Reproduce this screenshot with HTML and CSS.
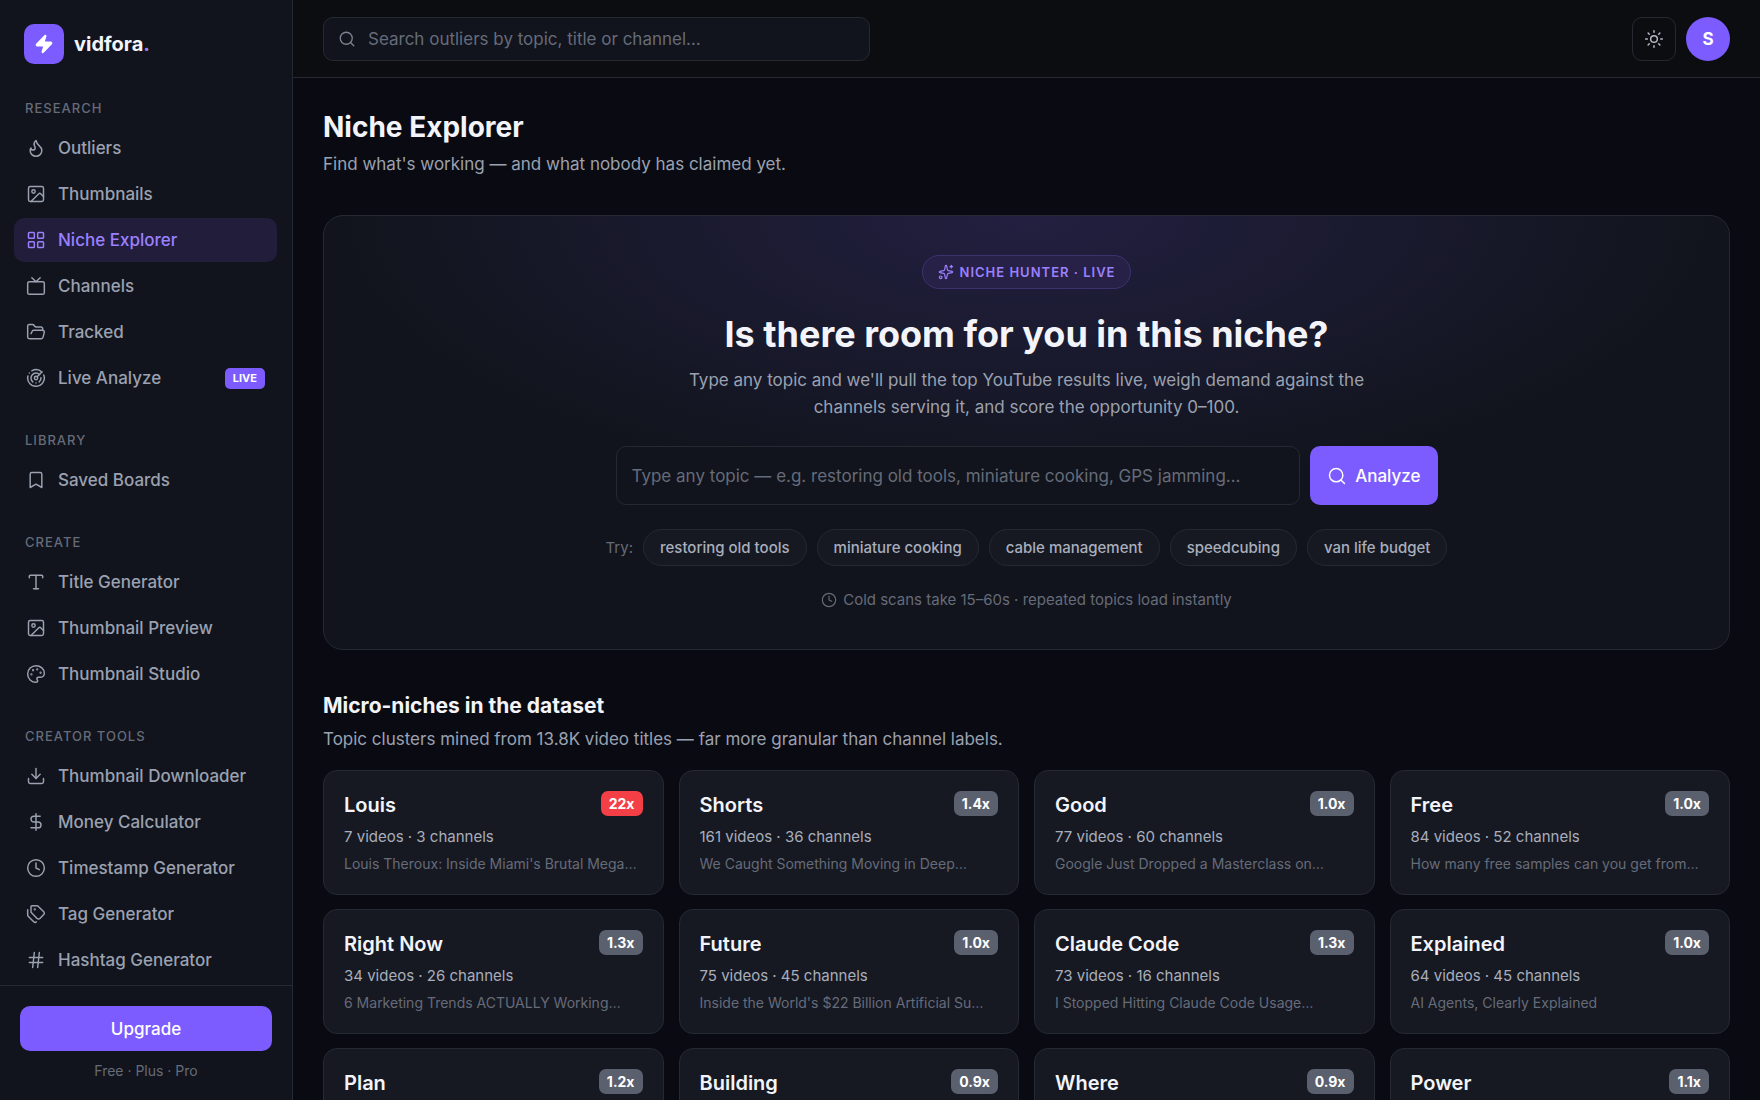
FILE: index.html
```
<!DOCTYPE html>
<html lang="en">

<head>
    <meta charset="utf-8">
    <meta name="viewport" content="width=device-width, initial-scale=1">
    <title>Niche Explorer - vidfora</title>
    <link rel="stylesheet" href="styles.css">
</head>
<body>
    <!-- icons used more than once -->
    <svg class="sprite" aria-hidden="true">
        <symbol id="i-image" viewBox="0 0 24 24"><rect width="18" height="18" x="3" y="3" rx="2"/><circle cx="9" cy="9" r="2"/><path d="m21 15-3.086-3.086a2 2 0 0 0-2.828 0L6 21"/></symbol>
        <symbol id="i-clock" viewBox="0 0 24 24"><circle cx="12" cy="12" r="10"/><path d="M12 6v6l4 2"/></symbol>
        <symbol id="i-search" viewBox="0 0 24 24"><circle cx="11" cy="11" r="8"/><path d="m21 21-4.3-4.3"/></symbol>
    </svg>

    <div class="app">
        <aside class="sidebar">
            <a class="logo" href="#">
                <span class="logo-mark">
                    <svg viewBox="0 0 24 24"><path d="M4 14a1 1 0 0 1-.78-1.63l9.9-10.2a.5.5 0 0 1 .86.46l-1.92 6.02A1 1 0 0 0 13 10h7a1 1 0 0 1 .78 1.63l-9.9 10.2a.5.5 0 0 1-.86-.46l1.92-6.02A1 1 0 0 0 11 14z"/></svg>
                </span>
                <span class="logo-text">vidfora<span class="dot">.</span></span>
            </a>

            <nav class="nav">
                <div class="nav-group">
                    <h2 class="nav-label">Research</h2>
                    <a class="nav-item" href="#"><svg class="icon" viewBox="0 0 24 24"><path d="M8.5 14.5A2.5 2.5 0 0 0 11 12c0-1.38-.5-2-1-3-1.072-2.143-.224-4.054 2-6 .5 2.5 2 4.9 4 6.5 2 1.6 3 3.5 3 5.5a7 7 0 1 1-14 0c0-1.153.433-2.294 1-3a2.5 2.5 0 0 0 2.5 2.5z"/></svg>Outliers</a>
                    <a class="nav-item" href="#"><svg class="icon"><use href="#i-image"/></svg>Thumbnails</a>
                    <a class="nav-item active" href="#"><svg class="icon" viewBox="0 0 24 24"><rect width="7" height="7" x="3" y="3" rx="1"/><rect width="7" height="7" x="14" y="3" rx="1"/><rect width="7" height="7" x="14" y="14" rx="1"/><rect width="7" height="7" x="3" y="14" rx="1"/></svg>Niche Explorer</a>
                    <a class="nav-item" href="#"><svg class="icon" viewBox="0 0 24 24"><path d="m17 2-5 5-5-5"/><rect width="20" height="15" x="2" y="7" rx="2"/></svg>Channels</a>
                    <a class="nav-item" href="#"><svg class="icon" viewBox="0 0 24 24"><path d="m6 14 1.5-2.9A2 2 0 0 1 9.24 10H20a2 2 0 0 1 1.94 2.5l-1.54 6a2 2 0 0 1-1.95 1.5H4a2 2 0 0 1-2-2V5a2 2 0 0 1 2-2h3.9a2 2 0 0 1 1.69.9l.81 1.2a2 2 0 0 0 1.67.9H18a2 2 0 0 1 2 2v2"/></svg>Tracked</a>
                    <a class="nav-item" href="#"><svg class="icon" viewBox="0 0 24 24"><path d="M19.07 4.93A10 10 0 0 0 6.99 3.34"/><path d="M4 6h.01"/><path d="M2.29 9.62A10 10 0 1 0 21.31 8.35"/><path d="M16.24 7.76A6 6 0 1 0 8.23 16.67"/><path d="M12 18h.01"/><path d="M17.99 11.66A6 6 0 0 1 15.77 16.67"/><circle cx="12" cy="12" r="2"/><path d="m13.41 10.59 5.66-5.66"/></svg>Live Analyze<span class="live">LIVE</span></a>
                </div>
                <div class="nav-group">
                    <h2 class="nav-label">Library</h2>
                    <a class="nav-item" href="#"><svg class="icon" viewBox="0 0 24 24"><path d="m19 21-7-4-7 4V5a2 2 0 0 1 2-2h10a2 2 0 0 1 2 2v16z"/></svg>Saved Boards</a>
                </div>
                <div class="nav-group">
                    <h2 class="nav-label">Create</h2>
                    <a class="nav-item" href="#"><svg class="icon" viewBox="0 0 24 24"><path d="M4 7V5a1 1 0 0 1 1-1h14a1 1 0 0 1 1 1v2"/><path d="M9 20h6"/><path d="M12 4v16"/></svg>Title Generator</a>
                    <a class="nav-item" href="#"><svg class="icon"><use href="#i-image"/></svg>Thumbnail Preview</a>
                    <a class="nav-item" href="#"><svg class="icon" viewBox="0 0 24 24"><path d="M12 22a1 1 0 0 1 0-20 10 9 0 0 1 10 9 5 5 0 0 1-5 5h-2.25a1.75 1.75 0 0 0-1.4 2.8l.3.4a1.75 1.75 0 0 1-1.4 2.8z"/><circle cx="13.5" cy="6.5" r=".5"/><circle cx="17.5" cy="10.5" r=".5"/><circle cx="6.5" cy="12.5" r=".5"/><circle cx="8.5" cy="7.5" r=".5"/></svg>Thumbnail Studio</a>
                </div>
                <div class="nav-group">
                    <h2 class="nav-label">Creator Tools</h2>
                    <a class="nav-item" href="#"><svg class="icon" viewBox="0 0 24 24"><path d="M21 15v4a2 2 0 0 1-2 2H5a2 2 0 0 1-2-2v-4"/><path d="m7 10 5 5 5-5"/><path d="M12 15V3"/></svg>Thumbnail Downloader</a>
                    <a class="nav-item" href="#"><svg class="icon" viewBox="0 0 24 24"><path d="M12 2v20"/><path d="M17 5H9.5a3.5 3.5 0 0 0 0 7h5a3.5 3.5 0 0 1 0 7H6"/></svg>Money Calculator</a>
                    <a class="nav-item" href="#"><svg class="icon"><use href="#i-clock"/></svg>Timestamp Generator</a>
                    <a class="nav-item" href="#"><svg class="icon" viewBox="0 0 24 24"><path d="M13.172 2a2 2 0 0 1 1.414.586l6.71 6.71a2.4 2.4 0 0 1 0 3.408l-4.592 4.592a2.4 2.4 0 0 1-3.408 0l-6.71-6.71A2 2 0 0 1 6 9.172V3a1 1 0 0 1 1-1z"/><path d="M2 7v6.172a2 2 0 0 0 .586 1.414l6.71 6.71a2.4 2.4 0 0 0 3.191.193"/><circle cx="10.5" cy="6.5" r=".5"/></svg>Tag Generator</a>
                    <a class="nav-item" href="#"><svg class="icon" viewBox="0 0 24 24"><path d="M4 9h16"/><path d="M4 15h16"/><path d="M10 3 8 21"/><path d="m16 3-2 18"/></svg>Hashtag Generator</a>
                </div>
            </nav>

            <div class="sidebar-foot">
                <button class="upgrade" type="button">Upgrade</button>
                <p class="plans">Free · Plus · Pro</p>
            </div>
        </aside>

        <div class="content">
            <header class="topbar">
                <label class="search">
                    <svg class="icon icon-sm"><use href="#i-search"/></svg>
                    <input type="search" aria-label="Search outliers" placeholder="Search outliers by topic, title or channel…">
                </label>
                <div class="topbar-right">
                    <button class="theme" type="button" aria-label="Toggle theme">
                        <svg class="icon" viewBox="0 0 24 24"><circle cx="12" cy="12" r="4"/><path d="M12 2v2"/><path d="M12 20v2"/><path d="m4.93 4.93 1.41 1.41"/><path d="m17.66 17.66 1.41 1.41"/><path d="M2 12h2"/><path d="M20 12h2"/><path d="m6.34 17.66-1.41 1.41"/><path d="m19.07 4.93-1.41 1.41"/></svg>
                    </button>
                    <button class="avatar" type="button">S</button>
                </div>
            </header>

            <main class="main">
                <h1 class="page-title">Niche Explorer</h1>
                <p class="page-sub">Find what's working — and what nobody has claimed yet.</p>

                <section class="hero">
                    <span class="hero-badge">
                        <svg class="icon icon-xs" viewBox="0 0 24 24"><path d="M11.017 2.814a1 1 0 0 1 1.966 0l1.051 5.558a2 2 0 0 0 1.594 1.594l5.558 1.051a1 1 0 0 1 0 1.966l-5.558 1.051a2 2 0 0 0-1.594 1.594l-1.051 5.558a1 1 0 0 1-1.966 0l-1.051-5.558a2 2 0 0 0-1.594-1.594l-5.558-1.051a1 1 0 0 1 0-1.966l5.558-1.051a2 2 0 0 0 1.594-1.594z"/><path d="M20 2v4"/><path d="M22 4h-4"/><circle cx="4" cy="20" r="2"/></svg>
                        NICHE HUNTER · LIVE
                    </span>
                    <h2 class="hero-title">Is there room for you in this niche?</h2>
                    <p class="hero-text">Type any topic and we'll pull the top YouTube results live, weigh demand against the channels serving it, and score the opportunity 0–100.</p>
                    <form class="hero-form">
                        <input type="text" aria-label="Topic" placeholder="Type any topic — e.g. restoring old tools, miniature cooking, GPS jamming…">
                        <button type="button"><svg class="icon"><use href="#i-search"/></svg>Analyze</button>
                    </form>
                    <div class="chips">
                        <span class="try">Try:</span>
                        <button class="chip" type="button">restoring old tools</button>
                        <button class="chip" type="button">miniature cooking</button>
                        <button class="chip" type="button">cable management</button>
                        <button class="chip" type="button">speedcubing</button>
                        <button class="chip" type="button">van life budget</button>
                    </div>
                    <p class="hero-note"><svg class="icon icon-xs"><use href="#i-clock"/></svg>Cold scans take 15–60s · repeated topics load instantly</p>
                </section>

                <h2 class="section-title">Micro-niches in the dataset</h2>
                <p class="section-sub">Topic clusters mined from 13.8K video titles — far more granular than channel labels.</p>

                <div class="cards">
                    <a class="card" href="#">
                        <div class="card-head"><h3>Louis</h3><span class="score hot">22x</span></div>
                        <p class="card-meta">7 videos · 3 channels</p>
                        <p class="card-video">Louis Theroux: Inside Miami's Brutal Mega…</p>
                    </a>
                    <a class="card" href="#">
                        <div class="card-head"><h3>Shorts</h3><span class="score">1.4x</span></div>
                        <p class="card-meta">161 videos · 36 channels</p>
                        <p class="card-video">We Caught Something Moving in Deep…</p>
                    </a>
                    <a class="card" href="#">
                        <div class="card-head"><h3>Good</h3><span class="score">1.0x</span></div>
                        <p class="card-meta">77 videos · 60 channels</p>
                        <p class="card-video">Google Just Dropped a Masterclass on…</p>
                    </a>
                    <a class="card" href="#">
                        <div class="card-head"><h3>Free</h3><span class="score">1.0x</span></div>
                        <p class="card-meta">84 videos · 52 channels</p>
                        <p class="card-video">How many free samples can you get from…</p>
                    </a>
                    <a class="card" href="#">
                        <div class="card-head"><h3>Right Now</h3><span class="score">1.3x</span></div>
                        <p class="card-meta">34 videos · 26 channels</p>
                        <p class="card-video">6 Marketing Trends ACTUALLY Working…</p>
                    </a>
                    <a class="card" href="#">
                        <div class="card-head"><h3>Future</h3><span class="score">1.0x</span></div>
                        <p class="card-meta">75 videos · 45 channels</p>
                        <p class="card-video">Inside the World's $22 Billion Artificial Su…</p>
                    </a>
                    <a class="card" href="#">
                        <div class="card-head"><h3>Claude Code</h3><span class="score">1.3x</span></div>
                        <p class="card-meta">73 videos · 16 channels</p>
                        <p class="card-video">I Stopped Hitting Claude Code Usage…</p>
                    </a>
                    <a class="card" href="#">
                        <div class="card-head"><h3>Explained</h3><span class="score">1.0x</span></div>
                        <p class="card-meta">64 videos · 45 channels</p>
                        <p class="card-video">AI Agents, Clearly Explained</p>
                    </a>
                    <a class="card" href="#">
                        <div class="card-head"><h3>Plan</h3><span class="score">1.2x</span></div>
                    </a>
                    <a class="card" href="#">
                        <div class="card-head"><h3>Building</h3><span class="score">0.9x</span></div>
                    </a>
                    <a class="card" href="#">
                        <div class="card-head"><h3>Where</h3><span class="score">0.9x</span></div>
                    </a>
                    <a class="card" href="#">
                        <div class="card-head"><h3>Power</h3><span class="score">1.1x</span></div>
                    </a>
                </div>
            </main>
        </div>
    </div>
</body>

</html>
```
FILE: styles.css
```
:root {
    --bg: #0a0b12;
    --panel: #11141c;
    --card: #161922;
    --line: #252932;
    --text: #f3f4fa;
    --soft: #9ba1b0;
    --dim: #666b79;
    --accent: #7c5cff;
    --accent-text: #9b80ff;
}

* {
    box-sizing: border-box;
}

body {
    margin: 0;
    background: var(--bg);
    color: var(--text);
    font-family: Inter, "Liberation Sans", sans-serif;
    font-size: 16px;
}

h1, h2, h3, p {
    margin: 0;
}

a {
    color: inherit;
    text-decoration: none;
}

button, input {
    font-family: inherit;
    color: inherit;
}

button {
    cursor: pointer;
}

input::placeholder {
    color: var(--dim);
    opacity: 1;
}

.sprite {
    display: none;
}

.icon {
    width: 20px;
    height: 20px;
    flex: none;
    fill: none;
    stroke: currentColor;
    stroke-width: 1.75;
    stroke-linecap: round;
    stroke-linejoin: round;
}

.icon-sm {
    width: 18px;
    height: 18px;
}

.icon-xs {
    width: 16px;
    height: 16px;
}

.app {
    display: flex;
    height: 100vh;
}

/* sidebar */
.sidebar {
    width: 293px;
    flex: none;
    display: flex;
    flex-direction: column;
    background: var(--panel);
    border-right: 1px solid var(--line);
}

.logo {
    display: flex;
    align-items: center;
    gap: 10px;
    padding: 24px 24px 0;
}

.logo-mark {
    display: grid;
    place-items: center;
    width: 40px;
    height: 40px;
    border-radius: 10px;
    background: var(--accent);
}

.logo-mark svg {
    width: 20px;
    height: 20px;
    fill: #fff;
    stroke: #fff;
    stroke-width: 2;
    stroke-linejoin: round;
}

.logo-text {
    font-size: 20px;
    font-weight: 700;
}

.dot {
    color: var(--accent-text);
}

.nav {
    flex: 1;
    min-height: 0;
    display: flex;
    flex-direction: column;
    gap: 31px;
    padding: 35px 15px 0 14px;
    overflow-y: auto;
    scrollbar-width: none;
}

.nav-group {
    display: flex;
    flex-direction: column;
    gap: 2px;
}

.nav-label {
    padding: 0 11px;
    margin-bottom: 7px;
    font-size: 13px;
    line-height: 18px;
    font-weight: 500;
    letter-spacing: 1px;
    text-transform: uppercase;
    color: var(--dim);
}

.nav-item {
    display: flex;
    align-items: center;
    gap: 12px;
    height: 44px;
    padding: 0 12px;
    border-radius: 10px;
    font-size: 17px;
    font-weight: 500;
    color: var(--soft);
}

.nav-item.active {
    background: #211d3b;
    color: var(--accent-text);
}

.live {
    margin-left: auto;
    padding: 0 8px;
    border-radius: 5px;
    background: var(--accent);
    color: #fff;
    font-size: 11px;
    line-height: 21px;
    font-weight: 700;
}

.sidebar-foot {
    padding: 20px 20px 19px;
    border-top: 1px solid var(--line);
    text-align: center;
}

.upgrade {
    width: 100%;
    height: 45px;
    border: 0;
    border-radius: 10px;
    background: var(--accent);
    color: #fff;
    font-size: 17px;
    font-weight: 500;
}

.plans {
    margin-top: 10px;
    font-size: 14px;
    line-height: 20px;
    color: var(--dim);
}

/* top bar */
.content {
    flex: 1;
    min-width: 0;
    display: flex;
    flex-direction: column;
}

.topbar {
    display: flex;
    align-items: center;
    justify-content: space-between;
    padding: 17px 30px 16px;
    background: #0b0d11;
    border-bottom: 1px solid var(--line);
}

.search {
    display: flex;
    align-items: center;
    gap: 12px;
    width: 100%;
    max-width: 547px;
    height: 44px;
    padding: 0 14px;
    border: 1px solid var(--line);
    border-radius: 10px;
    background: var(--panel);
    color: #7c8291;
}

.search input {
    flex: 1;
    min-width: 0;
    padding: 0;
    border: 0;
    outline: 0;
    background: none;
    font-size: 17px;
}

.topbar-right {
    display: flex;
    gap: 10px;
}

.theme, .avatar {
    display: grid;
    place-items: center;
    width: 44px;
    height: 44px;
    padding: 0;
}

.theme {
    border: 1px solid var(--line);
    border-radius: 10px;
    background: none;
    color: #b4b9c6;
}

.avatar {
    border: 0;
    border-radius: 50%;
    background: var(--accent);
    color: #fff;
    font-size: 17px;
    font-weight: 700;
}

/* page */
.main {
    flex: 1;
    min-height: 0;
    padding: 30px 30px 60px;
    overflow-y: auto;
    scrollbar-width: none;
}

.page-title {
    font-size: 28px;
    line-height: 38px;
    font-weight: 700;
}

.page-sub {
    margin-top: 5px;
    font-size: 17px;
    line-height: 26px;
    color: var(--soft);
}

.hero {
    display: flex;
    flex-direction: column;
    align-items: center;
    margin-top: 38px;
    padding: 39px 30px;
    border: 1px solid var(--line);
    border-radius: 20px;
    background: radial-gradient(ellipse 50% 65% at 50% 0, rgba(124, 92, 255, 0.16), transparent) var(--panel);
    text-align: center;
}

.hero-badge {
    display: flex;
    align-items: center;
    gap: 6px;
    height: 34px;
    padding: 0 15px;
    border: 1px solid #3c3270;
    border-radius: 17px;
    background: #272047;
    color: var(--accent-text);
    font-size: 13px;
    font-weight: 600;
    letter-spacing: 1px;
}

.hero-title {
    margin-top: 22px;
    font-size: 36px;
    line-height: 46px;
    font-weight: 700;
}

.hero-text {
    max-width: 700px;
    margin-top: 10px;
    font-size: 17px;
    line-height: 27px;
    color: var(--soft);
}

.hero-form {
    display: flex;
    gap: 10px;
    width: 100%;
    max-width: 822px;
    margin-top: 25px;
}

.hero-form input {
    flex: 1;
    min-width: 0;
    height: 59px;
    padding: 0 15px;
    border: 1px solid var(--line);
    border-radius: 10px;
    outline: 0;
    background: var(--panel);
    font-size: 17px;
}

.hero-form button {
    display: flex;
    align-items: center;
    gap: 8px;
    padding: 0 17px;
    border: 0;
    border-radius: 10px;
    background: var(--accent);
    color: #fff;
    font-size: 17px;
    font-weight: 500;
}

.chips {
    display: flex;
    flex-wrap: wrap;
    align-items: center;
    justify-content: center;
    gap: 10px;
    margin-top: 24px;
}

.try {
    font-size: 15px;
    color: var(--dim);
}

.chip {
    height: 37px;
    padding: 0 16px;
    border: 1px solid var(--line);
    border-radius: 19px;
    background: var(--card);
    color: #a9aebc;
    font-size: 15px;
    font-weight: 500;
}

.hero-note {
    display: flex;
    align-items: center;
    gap: 6px;
    margin-top: 24px;
    font-size: 15px;
    line-height: 20px;
    color: var(--dim);
}

.section-title {
    margin-top: 41px;
    font-size: 21px;
    line-height: 30px;
    font-weight: 700;
}

.section-sub {
    margin-top: 5px;
    font-size: 17px;
    line-height: 26px;
    color: var(--soft);
}

.cards {
    display: grid;
    grid-template-columns: repeat(4, 1fr);
    gap: 14px 15px;
    margin-top: 18px;
}

.card {
    min-width: 0;
    min-height: 125px;
    padding: 20px 20px 17px;
    border: 1px solid var(--line);
    border-radius: 14px;
    background: var(--card);
}

.card-head {
    display: flex;
    align-items: flex-start;
    justify-content: space-between;
    gap: 10px;
}

.card-head h3 {
    font-size: 20px;
    line-height: 28px;
    font-weight: 600;
}

.score {
    padding: 0 8px;
    border-radius: 7px;
    background: #5a606d;
    color: #fff;
    font-size: 14px;
    line-height: 25px;
    font-weight: 700;
}

.score.hot {
    background: #f43f46;
}

.card-meta, .card-video {
    line-height: 22px;
    overflow: hidden;
    white-space: nowrap;
    text-overflow: ellipsis;
}

.card-meta {
    margin-top: 7px;
    font-size: 15px;
    color: #a9aebc;
}

.card-video {
    margin-top: 5px;
    font-size: 14px;
    color: var(--dim);
}
```
